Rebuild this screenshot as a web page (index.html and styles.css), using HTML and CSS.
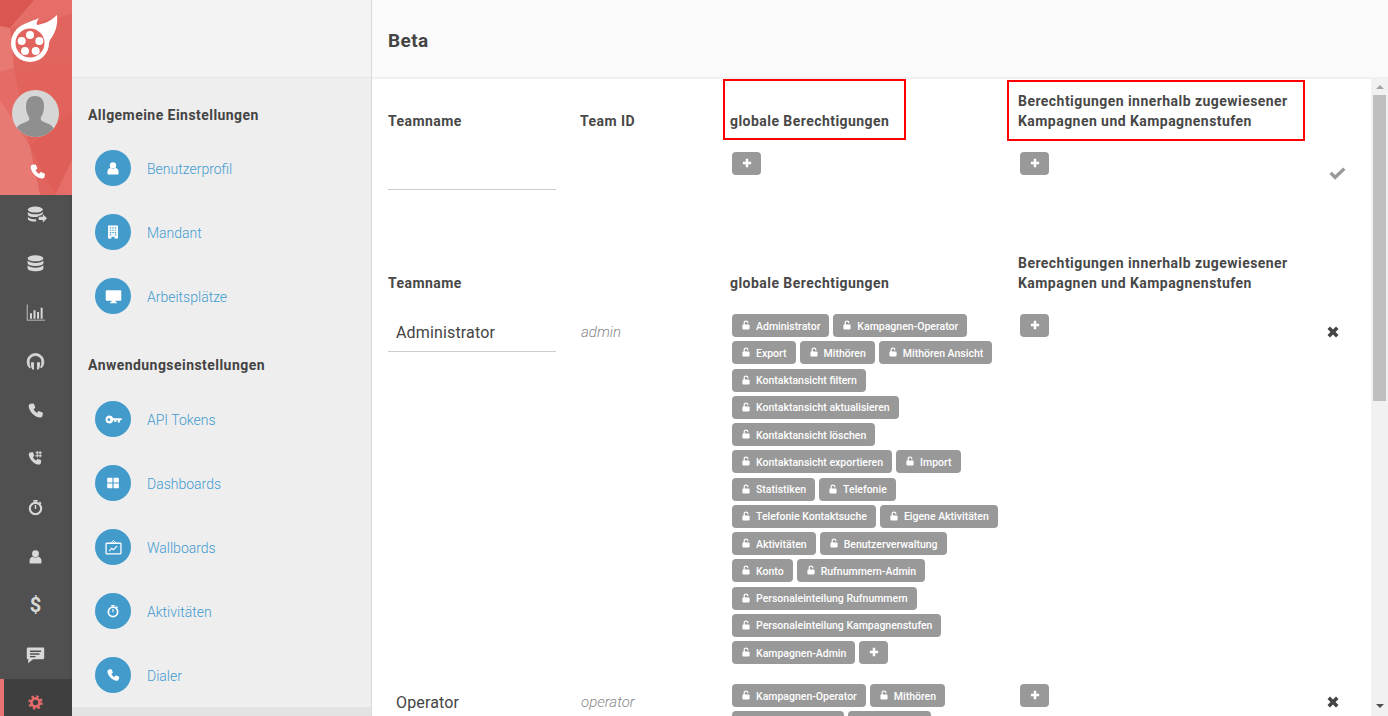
FILE: index.html
```html
<!DOCTYPE html>
<html>
    <head>
        <title>Beta</title>
        <meta charset="UTF-8"/>
        <link rel="stylesheet" href="styles.css">
    </head>
    <body>
        <svg class="sprite" width="0" height="0">
            <symbol id="i-phone" viewBox="0 0 24 24"><path d="M5.2 2.6 8.6 2c.6-.1 1 .2 1.200.7l1.800 4.500c.2.500.1.900-.3 1.300L9.200 10.200c1.100 2.200 2.900 4 5.100 5.100l1.700-2.100c.4-.4.800-.5 1.300-.3l4.500 1.800c.5.200.8.600.7 1.200l-.6 3.400c-.3 1.700-2.300 3-4.400 2.600C10.100 20.500 3.900 14 2.500 7c-.4-2.100.9-4.100 2.700-4.400z"/></symbol>
            <symbol id="i-user" viewBox="0 0 24 24"><circle cx="12" cy="7.500" r="5.500"/><path d="M2.500 22v-3.500c0-3.700 2.500-6 5.500-6.300 1.200 1 2.500 1.500 4 1.500s2.800-.5 4-1.500c3 .3 5.500 2.600 5.500 6.300V22c-.1.500-.5 1-1 1h-17c-.5 0-.9-.5-1-1z"/></symbol>
            <symbol id="i-building" viewBox="0 0 24 24"><path fill-rule="evenodd" d="M3.500 1h17v22h-6v-3h-5v3h-6zM6.500 4v2h2.500V4zM10.800 4v2h2.400V4zM15 4v2h2.500V4zM6.500 8v2h2.500V8zM10.800 8v2h2.400V8zM15 8v2h2.500V8zM6.500 12v2h2.500v-2zM10.800 12v2h2.400v-2zM15 12v2h2.500v-2zM6.500 16v2h2.500v-2zM15 16v2h2.500v-2z"/></symbol>
            <symbol id="i-desktop" viewBox="0 0 24 24"><path d="M2.500 3h19c.8 0 1.500.7 1.500 1.500v12c0 .8-.7 1.500-1.500 1.500H15v2h2v1.500H7V20h2v-2H2.500C1.700 18 1 17.300 1 16.500v-12C1 3.700 1.700 3 2.500 3z"/></symbol>
            <symbol id="i-key" viewBox="0 0 24 24"><path fill-rule="evenodd" d="M6.500 6.500a5.500 5.500 0 0 1 5.200 3.700H23.500v3h-2.400v3h-3v-3h-2v2.200h-3v-2.200h-1.400a5.500 5.500 0 1 1-5.200-6.700zM5.500 10.200a2 2 0 1 0 0 4 2 2 0 0 0 0-4z"/></symbol>
            <symbol id="i-grid" viewBox="0 0 24 24"><path d="M3.500 3H11v8H2V4.500C2 3.700 2.700 3 3.500 3zM13 3h7.500c.8 0 1.500.7 1.500 1.500V11h-9zM2 13h9v8H3.500C2.700 21 2 20.300 2 19.500zM13 13h9v6.500c0 .8-.7 1.500-1.500 1.500H13z"/></symbol>
            <symbol id="i-board" viewBox="0 0 24 24"><path d="M12 2 16 6H8z" fill="none" stroke="currentColor" stroke-width="1.300"/><rect x="1.500" y="6" width="21" height="15" rx="1" fill="none" stroke="currentColor" stroke-width="1.800"/><path d="M6 17l3.500-4 2.500 2 5-5" fill="none" stroke="currentColor" stroke-width="1.600"/></symbol>
            <symbol id="i-timer" viewBox="0 0 24 24"><circle cx="12" cy="13.500" r="8" fill="none" stroke="currentColor" stroke-width="3"/><path d="M9 1.500h6v2.500H9zM18 3.500l2.500 2.200-1.500 1.700-2.500-2.200zM11 8.500h2V14h-2z"/></symbol>
            <symbol id="i-data" viewBox="0 0 24 24"><ellipse cx="12" cy="5.500" rx="10" ry="3.800"/><path d="M2 8.300c1.500 2 5.500 3 10 3s8.500-1 10-3v3.200c0 2.100-4.500 3.800-10 3.800S2 13.600 2 11.500zM2 14.300c1.500 2 5.500 3 10 3s8.500-1 10-3v3.700c0 2.200-4.500 3.900-10 3.900S2 20.200 2 18z"/></symbol>
            <symbol id="i-data-out" viewBox="0 0 24 24"><ellipse cx="10" cy="5.500" rx="9" ry="3.600"/><path d="M1 8.300c1.400 1.900 5 2.800 9 2.800s7.600-.9 9-2.800v2.500c-1.500 1.500-4.200 2.300-6 2.400v1.300h-3C5 14.500 1 13.300 1 11zM1 14.300c1.500 1.800 5 2.800 9 2.800h1v2.800c-5.200.2-10-1.200-10-3.400z"/><path d="M14 14h5v-3l5 5-5 5v-3h-5z"/></symbol>
            <symbol id="i-chart" viewBox="0 0 24 24"><path d="M1 2h1v19h22v1H1z"/><path d="M5 13h2.500v7H5zM9.500 9h2.500v11H9.500zM14 11.500h2.500V20H14zM18.500 6H21v14h-2.500z"/></symbol>
            <symbol id="i-headset" viewBox="0 0 24 24"><path d="M12 2C6 2 1.500 6.500 1.500 12.500c0 3 1 5.500 3 7.500l1-.5c-1-1.800-1.500-4.500-1.500-7 0-4.500 3.500-8 8-8s8 3.500 8 8c0 2.500-.5 5.200-1.500 7l1 .5c2-2 3-4.500 3-7.500C22.500 6.500 18 2 12 2z" stroke="currentColor"/><path d="M6.500 13h3.500v9H8c-1.500-2-2-6-1.500-9zM17.500 13H14v9h2c1.500-2 2-6 1.500-9z"/></symbol>
            <symbol id="i-phone-hash" viewBox="0 0 24 24"><path d="M4.500 3.500 7.500 3c.5-.1.900.2 1.100.6l1.500 4c.2.400.1.800-.3 1.100L8.300 10.300c1 2 2.500 3.600 4.500 4.500l1.500-1.800c.3-.4.700-.5 1.100-.3l4 1.500c.4.200.7.600.6 1.100l-.5 3c-.3 1.500-2 2.700-3.900 2.300C9.500 19.400 4.200 13.800 2.600 7.400 2.200 5.600 3 3.800 4.500 3.500z"/><path d="M14.500 1.500v9M18.500 1.500v9M12 4h9M12 8h9" fill="none" stroke="currentColor" stroke-width="1.500"/></symbol>
            <symbol id="i-comment" viewBox="0 0 24 24"><path fill-rule="evenodd" d="M3 3h18.500c.8 0 1.500.7 1.500 1.500v12c0 .8-.7 1.500-1.500 1.500H9l-6.500 5 .5-5H2.500c-.8 0-1.500-.7-1.500-1.500v-12C1 3.700 1.700 3 2.500 3zM5 7v1.800h14V7zM5 10.500v1.800h12v-1.800zM5 14v1.500h7V14z"/></symbol>
            <symbol id="i-gear" viewBox="0 0 24 24"><circle cx="12" cy="12" r="6.500" fill="none" stroke="currentColor" stroke-width="4.500"/><circle cx="12" cy="12" r="9.800" fill="none" stroke="currentColor" stroke-width="3.600" stroke-dasharray="3.900 3.800"/></symbol>
            <symbol id="i-lock" viewBox="0 0 10 12"><path d="M1.500 5.500H2V3.200C2 1.400 3.300.5 5 .5s3 .9 3 2.700v.6H6.500v-.6c0-.9-.6-1.300-1.500-1.300s-1.500.4-1.500 1.300v2.300h5c.6 0 1 .4 1 1v4c0 .6-.4 1-1 1h-7c-.6 0-1-.4-1-1v-4c0-.6.4-1 1-1z"/></symbol>
            <symbol id="i-plus" viewBox="0 0 12 12"><path d="M4.500 1h3v3.500H11v3H7.500V11h-3V7.500H1v-3h3.500z"/></symbol>
            <symbol id="i-check" viewBox="0 0 18 14"><path d="M6.500 13.500 0.500 7.500l2.500-2.500 3.500 3.500L15 0.500l2.500 2.500z"/></symbol>
            <symbol id="i-times" viewBox="0 0 12 12"><path d="M3 .5 6 3.500 9 .5 11.500 3 8.500 6l3 3L9 11.500l-3-3-3 3L.5 9l3-3-3-3z"/></symbol>
        </svg>

        <div class="app">
            <!-- linke Leiste -->
            <aside class="rail">
                <div class="brand">
                    <svg class="brand-bg" viewBox="0 0 72 195" width="72" height="195">
                        <rect width="72" height="195" fill="#e2645e"/>
                        <path d="M0 0H34L10 28 0 26z" fill="#da5650"/>
                        <path d="M34 0H72V14L10 28z" fill="#e56f68"/>
                        <path d="M0 26 10 28 14 68 0 72z" fill="#e77972"/>
                        <path d="M0 72 14 68 30 146 0 100z" fill="#e56c66"/>
                        <path d="M14 68 72 58V112L30 146z" fill="#e1635c"/>
                        <path d="M0 100 30 146 40 195H0z" fill="#e77a73"/>
                        <path d="M30 146 72 112V195H55z" fill="#df5e57"/>
                        <path d="M55 195 72 160V195z" fill="#e56f68"/>
                    </svg>
                    <svg class="logo" viewBox="0 0 72 78" width="72" height="78">
                        <path fill="#fff" d="M16 30C22 23 31 22 39 18 37 21 36 23 37 25 44 24 51 21 57 15 58 24 56 32 50 40L46 50 20 40z"/>
                        <circle cx="30" cy="43" r="19" fill="#fff"/>
                        <circle cx="30" cy="43" r="14.500" fill="#e2645e"/>
                        <g fill="#fff">
                            <circle cx="30" cy="35" r="4"/>
                            <circle cx="21.700" cy="41" r="4"/>
                            <circle cx="39.300" cy="41" r="4"/>
                            <circle cx="25" cy="51" r="4"/>
                            <circle cx="35.700" cy="51" r="4"/>
                        </g>
                    </svg>
                    <div class="avatar">
                        <svg viewBox="0 0 46 46" width="46" height="46">
                            <path fill="#8f8f8f" d="M23 5c6 0 9 4 9 10 0 5-1 8-3 11-1 2 0 4 3 5 5 2 9 3 10 8 0 2-1 3-3 4-5 3-11 3-16 3s-11 0-16-3c-2-1-3-2-3-4 1-5 5-6 10-8 3-1 4-3 3-5-2-3-3-6-3-11 0-6 3-10 9-10z"/>
                        </svg>
                    </div>
                    <svg class="brand-call"><use href="#i-phone"/></svg>
                </div>
                <nav class="nav">
                    <a class="nav-item"><svg class="wide"><use href="#i-data-out"/></svg></a>
                    <a class="nav-item"><svg><use href="#i-data"/></svg></a>
                    <a class="nav-item"><svg><use href="#i-chart"/></svg></a>
                    <a class="nav-item"><svg><use href="#i-headset"/></svg></a>
                    <a class="nav-item"><svg class="mid"><use href="#i-phone"/></svg></a>
                    <a class="nav-item"><svg class="mid"><use href="#i-phone-hash"/></svg></a>
                    <a class="nav-item"><svg class="mid"><use href="#i-timer"/></svg></a>
                    <a class="nav-item"><svg class="small"><use href="#i-user"/></svg></a>
                    <a class="nav-item nav-dollar">$</a>
                    <a class="nav-item"><svg><use href="#i-comment"/></svg></a>
                    <a class="nav-item active"><svg class="small"><use href="#i-gear"/></svg></a>
                </nav>
            </aside>

            <!-- Einstellungen -->
            <section class="panel">
                <div class="panel-top"></div>
                <h2 class="panel-title">Allgemeine Einstellungen</h2>
                <ul class="menu">
                    <li><span class="bubble"><svg><use href="#i-user"/></svg></span>Benutzerprofil</li>
                    <li><span class="bubble"><svg><use href="#i-building"/></svg></span>Mandant</li>
                    <li><span class="bubble"><svg class="big"><use href="#i-desktop"/></svg></span>Arbeitsplätze</li>
                </ul>
                <h2 class="panel-title second">Anwendungseinstellungen</h2>
                <ul class="menu">
                    <li><span class="bubble"><svg class="big"><use href="#i-key"/></svg></span>API Tokens</li>
                    <li><span class="bubble"><svg><use href="#i-grid"/></svg></span>Dashboards</li>
                    <li><span class="bubble"><svg class="big"><use href="#i-board"/></svg></span>Wallboards</li>
                    <li><span class="bubble"><svg><use href="#i-timer"/></svg></span>Aktivitäten</li>
                    <li><span class="bubble"><svg><use href="#i-phone"/></svg></span>Dialer</li>
                </ul>
                <div class="panel-end"></div>
            </section>

            <!-- Inhalt -->
            <main class="main">
                <header class="main-top"><h1>Beta</h1></header>
                <div class="main-body">
                    <div class="content">
                        <div class="row head">
                            <div class="label">Teamname</div>
                            <div class="label">Team ID</div>
                            <div class="label mark mark-global">globale Berechtigungen</div>
                            <div class="label mark mark-scope">Berechtigungen innerhalb zugewiesener<br>Kampagnen und Kampagnenstufen</div>
                        </div>
                        <div class="row new-team">
                            <div class="name"></div>
                            <div class="team-id"></div>
                            <div class="tags"><span class="tag plus"><svg><use href="#i-plus"/></svg></span></div>
                            <div class="tags"><span class="tag plus"><svg><use href="#i-plus"/></svg></span></div>
                            <div class="action save"><svg><use href="#i-check"/></svg></div>
                        </div>
                        <div class="row head head-list">
                            <div class="label">Teamname</div>
                            <div class="label"></div>
                            <div class="label">globale Berechtigungen</div>
                            <div class="label">Berechtigungen innerhalb zugewiesener<br>Kampagnen und Kampagnenstufen</div>
                        </div>
                        <div class="row team">
                            <div class="name">Administrator</div>
                            <div class="team-id">admin</div>
                            <div class="tags">
                                <span class="tag"><svg><use href="#i-lock"/></svg>Administrator</span>
                                <span class="tag"><svg><use href="#i-lock"/></svg>Kampagnen-Operator</span>
                                <span class="tag"><svg><use href="#i-lock"/></svg>Export</span>
                                <span class="tag"><svg><use href="#i-lock"/></svg>Mithören</span>
                                <span class="tag"><svg><use href="#i-lock"/></svg>Mithören Ansicht</span>
                                <span class="tag"><svg><use href="#i-lock"/></svg>Kontaktansicht filtern</span>
                                <span class="tag"><svg><use href="#i-lock"/></svg>Kontaktansicht aktualisieren</span>
                                <span class="tag"><svg><use href="#i-lock"/></svg>Kontaktansicht löschen</span>
                                <span class="tag"><svg><use href="#i-lock"/></svg>Kontaktansicht exportieren</span>
                                <span class="tag"><svg><use href="#i-lock"/></svg>Import</span>
                                <span class="tag"><svg><use href="#i-lock"/></svg>Statistiken</span>
                                <span class="tag"><svg><use href="#i-lock"/></svg>Telefonie</span>
                                <span class="tag"><svg><use href="#i-lock"/></svg>Telefonie Kontaktsuche</span>
                                <span class="tag"><svg><use href="#i-lock"/></svg>Eigene Aktivitäten</span>
                                <span class="tag"><svg><use href="#i-lock"/></svg>Aktivitäten</span>
                                <span class="tag"><svg><use href="#i-lock"/></svg>Benutzerverwaltung</span>
                                <span class="tag"><svg><use href="#i-lock"/></svg>Konto</span>
                                <span class="tag"><svg><use href="#i-lock"/></svg>Rufnummern-Admin</span>
                                <span class="tag"><svg><use href="#i-lock"/></svg>Personaleinteilung Rufnummern</span>
                                <span class="tag"><svg><use href="#i-lock"/></svg>Personaleinteilung Kampagnenstufen</span>
                                <span class="tag"><svg><use href="#i-lock"/></svg>Kampagnen-Admin</span>
                                <span class="tag plus"><svg><use href="#i-plus"/></svg></span>
                            </div>
                            <div class="tags"><span class="tag plus"><svg><use href="#i-plus"/></svg></span></div>
                            <div class="action"><svg><use href="#i-times"/></svg></div>
                        </div>
                        <div class="row team">
                            <div class="name">Operator</div>
                            <div class="team-id">operator</div>
                            <div class="tags">
                                <span class="tag"><svg><use href="#i-lock"/></svg>Kampagnen-Operator</span>
                                <span class="tag"><svg><use href="#i-lock"/></svg>Mithören</span>
                                <span class="tag tag-cut"><svg><use href="#i-lock"/></svg></span>
                                <span class="tag tag-cut tag-cut-short"><svg><use href="#i-lock"/></svg></span>
                            </div>
                            <div class="tags"><span class="tag plus"><svg><use href="#i-plus"/></svg></span></div>
                            <div class="action"><svg><use href="#i-times"/></svg></div>
                        </div>
                    </div>
                    <div class="scrollbar">
                        <span class="arrow up"></span>
                        <span class="thumb"></span>
                        <span class="arrow down"></span>
                    </div>
                </div>
            </main>
        </div>
    </body>
</html>
```

FILE: styles.css
```css
* {
    box-sizing: border-box;
}

html, body {
    margin: 0;
    height: 100%;
    overflow: hidden;
}

body {
    font-family: Roboto, "Liberation Sans", sans-serif;
    color: #444;
    background: #fff;
}

.sprite {
    display: block;
}

svg {
    fill: currentColor;
}

.app {
    display: flex;
    height: 716px;
}

/* linke Leiste */
.rail {
    width: 72px;
    flex: none;
    display: flex;
    flex-direction: column;
    background: #505050;
    box-shadow: inset -2px 0 2px rgba(0, 0, 0, .08);
}

.brand {
    position: relative;
    z-index: 1;
    height: 195px;
    flex: none;
    display: flex;
    flex-direction: column;
    overflow: hidden;
}

.brand-bg {
    position: absolute;
    top: 0;
    left: 0;
}

.logo {
    position: relative;
    display: block;
    flex: none;
    margin-bottom: 12px;
}

.avatar {
    position: relative;
    width: 47px;
    height: 47px;
    margin-left: 12px;
    border-radius: 50%;
    background: #d6d6d6;
    overflow: hidden;
    flex: none;
}

.avatar svg {
    display: block;
    margin-top: 1px;
}

.brand-call {
    position: relative;
    width: 17px;
    height: 17px;
    margin: 26px 0 0 29px;
    color: #fff;
    flex: none;
}

.nav {
    margin-top: -4.400px;
    display: flex;
    flex-direction: column;
}

.nav-item {
    height: 48.800px;
    flex: none;
    display: flex;
    align-items: center;
    justify-content: center;
    padding-right: 1px;
    color: #d8d8d8;
}

.nav-item svg {
    width: 19px;
    height: 19px;
}

.nav-item svg.wide {
    width: 20px;
    height: 20px;
    margin-left: 3px;
}

.nav-item svg.mid {
    width: 17px;
    height: 17px;
}

.nav-item svg.small {
    width: 15px;
    height: 15px;
}

.nav-dollar {
    font-size: 20px;
    font-weight: 700;
}

.nav-item.active {
    background: #3f3f3f;
    border-left: 4px solid #e97373;
    color: #e46a6a;
    padding-right: 6px;
}

/* Einstellungen */
.panel {
    width: 300px;
    flex: none;
    display: flex;
    flex-direction: column;
    background: #eee;
    border-right: 1px solid #d9d9d9;
}

.panel-top {
    height: 78px;
    flex: none;
    background: #f3f3f3;
    border-bottom: 1px solid #e6e6e6;
}

.panel-title {
    margin: 27px 0 25px 16px;
    font-size: 14px;
    line-height: 20px;
    font-weight: 700;
    letter-spacing: .45px;
    color: #444;
}

.panel-title.second {
    margin-top: 41px;
    margin-bottom: 26px;
}

.menu {
    margin: 0;
    padding: 0 0 0 23px;
    list-style: none;
    display: flex;
    flex-direction: column;
    gap: 28px;
}

.menu li {
    display: flex;
    align-items: flex-start;
    gap: 16px;
    height: 36px;
    font-size: 14px;
    line-height: 38px;
    font-weight: 300;
    color: #3f9bd0;
}

.bubble {
    width: 36px;
    height: 36px;
    border-radius: 50%;
    flex: none;
    display: flex;
    align-items: center;
    justify-content: center;
    background: #429bcb;
    color: #fff;
}

.bubble svg {
    width: 14px;
    height: 14px;
}

.bubble svg.big {
    width: 17px;
    height: 17px;
}

.panel-end {
    margin-top: auto;
    height: 9px;
    flex: none;
    background: #e3e3e3;
}

/* Inhalt */
.main {
    flex: 1;
    min-width: 0;
    display: flex;
    flex-direction: column;
}

.main-top {
    height: 79px;
    flex: none;
    padding-left: 16px;
    display: flex;
    align-items: center;
    background: #fafafa;
    border-bottom: 2px solid #f0f0f0;
}

.main-top h1 {
    margin: 4px 0 0 0;
    font-size: 19px;
    font-weight: 700;
    letter-spacing: .4px;
    color: #444;
}

.main-body {
    flex: 1;
    min-height: 0;
    display: flex;
}

.content {
    flex: 1;
    min-width: 0;
    overflow: hidden;
}

.row {
    display: grid;
    grid-template-columns: 192px 150px 288px 302px 48px;
    padding-left: 16px;
}

.head {
    align-items: end;
    height: 62px;
}

.label {
    font-size: 14px;
    line-height: 20px;
    font-weight: 700;
    letter-spacing: .45px;
    color: #484848;
    padding-bottom: 10px;
}

.mark {
    border: 2px solid #f00;
}

.mark-global {
    width: 183px;
    height: 61px;
    margin: 0 0 1px -7px;
    padding: 30px 0 7px 5px;
}

.mark-scope {
    width: 298px;
    height: 61px;
    margin-left: -11px;
    padding: 9px 0 8px 9px;
}

.new-team {
    height: 112px;
    padding-top: 11px;
}

.head-list {
    height: 40px;
    margin-bottom: 1px;
}

.head-list .label {
    padding-bottom: 0;
}

.team {
    padding-top: 20px;
}

.name {
    width: 168px;
    height: 38px;
    padding-left: 8px;
    font-size: 16px;
    letter-spacing: .15px;
    line-height: 38px;
    color: #444;
    border-bottom: 1px solid #ccc;
}

.team-id {
    padding-left: 1px;
    font-size: 15px;
    line-height: 37px;
    font-weight: 300;
    font-style: italic;
    color: #888;
}

.tags {
    display: flex;
    flex-wrap: wrap;
    align-content: flex-start;
    gap: 4.250px 4px;
    margin-left: 2px;
    width: 276px;
}

.tag {
    height: 23px;
    padding: 1px 9px 0 10px;
    display: inline-flex;
    align-items: center;
    gap: 6px;
    font-size: 10.500px;
    font-weight: 500;
    color: #fff;
    background: #999;
    border-radius: 4px;
}

.tag svg {
    width: 8px;
    height: 10px;
    margin-bottom: 2px;
    flex: none;
}

/* zweite Reihe, am unteren Rand abgeschnitten */
.tag-cut {
    width: 112px;
}

.tag-cut-short {
    width: 83px;
}

.tag.plus {
    width: 29px;
    padding: 0;
    justify-content: center;
}

.tag.plus svg {
    width: 10px;
    height: 10px;
    margin-bottom: 2px;
}

.action {
    color: #444;
    padding: 12px 0 0 7px;
}

.action svg {
    display: block;
    width: 12px;
    height: 12px;
}

.action.save {
    color: #999;
    padding: 15px 0 0 9px;
}

.action.save svg {
    width: 17px;
    height: 13.200px;
}

.scrollbar {
    width: 17px;
    flex: none;
    height: 100%;
    display: flex;
    flex-direction: column;
    align-items: center;
    background: #f1f1f1;
}

.thumb {
    width: 13px;
    height: 306px;
    margin-top: 6px;
    background: #bfbfbf;
}

.arrow {
    width: 0;
    height: 0;
    flex: none;
    border-left: 4px solid transparent;
    border-right: 4px solid transparent;
}

.arrow.up {
    margin-top: 6px;
    border-bottom: 4px solid #a3a3a3;
}

.arrow.down {
    margin-top: auto;
    margin-bottom: 8px;
    border-top: 4px solid #505050;
}
```
